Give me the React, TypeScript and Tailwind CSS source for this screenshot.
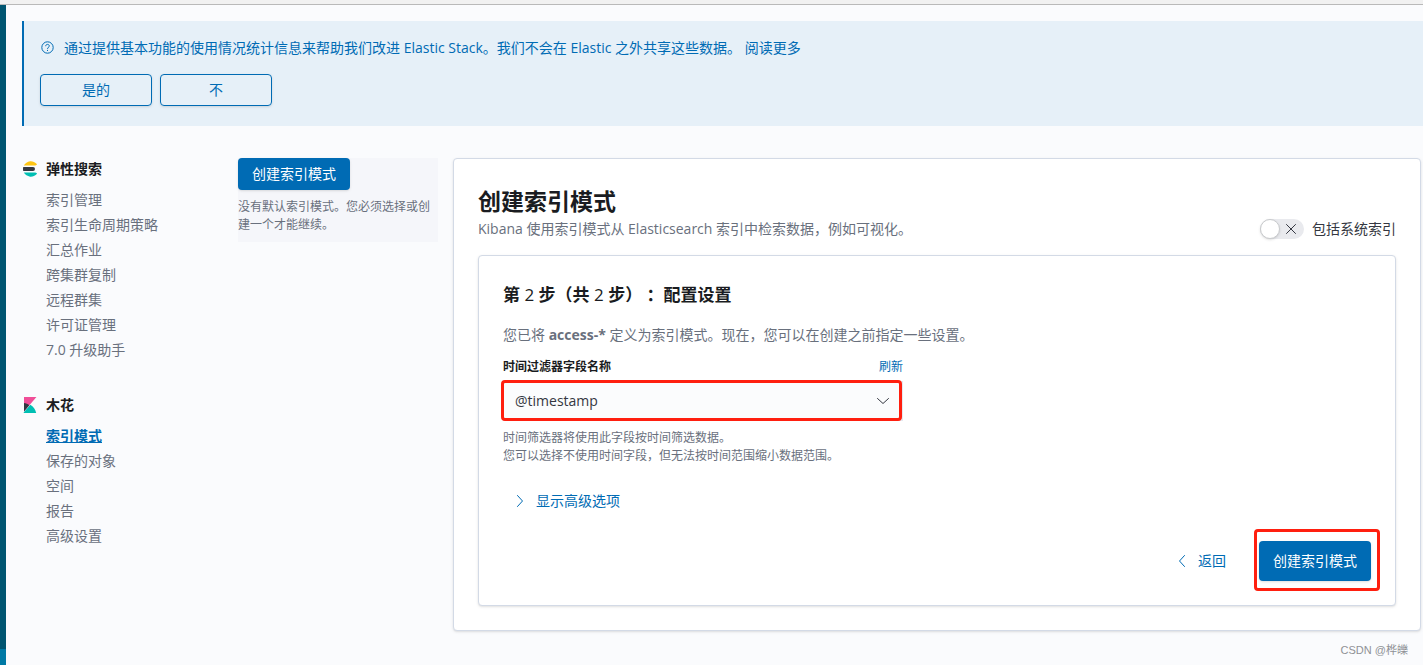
import React, { useState } from 'react';

interface NavSection {
  title: string;
  icon: React.ReactNode;
  items: string[];
  active?: string;
}

const ElasticsearchLogo = () => (
  <svg width="16" height="16" viewBox="0 0 32 32" aria-hidden="true">
    <path fill="#343741" d="M2 16c0 1.400.2 2.700.5 4H22a4 4 0 000-8H2.500A16 16 0 002 16z" />
    <path fill="#FEC514" d="M28.900 8a12 12 0 001.200-1.400A16 16 0 003.600 9h22.900c.9 0 1.700-.4 2.400-1z" />
    <path fill="#00BFB3" d="M26.500 23H3.600a16 16 0 0026.500 2.400A12 12 0 0028.900 24c-.7-.6-1.500-1-2.400-1z" />
  </svg>
);

const KibanaLogo = () => (
  <svg width="16" height="16" viewBox="0 0 32 32" aria-hidden="true">
    <path fill="#F04E98" d="M4 0v28.800L28.900 0z" />
    <path fill="#343741" d="M4 12v16.800L14.500 16.700C11.400 13.700 8 12.200 4 12z" />
    <path fill="#00BFB3" d="M16.600 15.600L3.300 31v1h25.100c-1.400-6.900-5.700-12.800-11.800-16.400z" />
  </svg>
);

const SECTIONS: NavSection[] = [
  {
    title: '弹性搜索',
    icon: <ElasticsearchLogo />,
    items: ['索引管理', '索引生命周期策略', '汇总作业', '跨集群复制', '远程群集', '许可证管理', '7.0 升级助手'],
  },
  {
    title: '木花',
    icon: <KibanaLogo />,
    items: ['索引模式', '保存的对象', '空间', '报告', '高级设置'],
    active: '索引模式',
  },
];

interface ChevronProps {
  d: string;
  className?: string;
}

const Chevron: React.FC<ChevronProps> = ({ d, className }) => (
  <svg className={className} width="16" height="16" viewBox="0 0 16 16" fill="none" stroke="currentColor" strokeWidth="1" strokeLinecap="round" strokeLinejoin="round" aria-hidden="true">
    <path d={d} />
  </svg>
);

const UsageCallout = () => (
  <section className="border-l-2 border-[#006BB4] bg-[#E6F0F8] px-4 pt-4 pb-5 text-[#006BB4]">
    <div className="flex items-center gap-2 leading-[22px]">
      <svg width="16" height="16" viewBox="0 0 16 16" fill="none" stroke="currentColor" strokeWidth="1" aria-hidden="true">
        <circle cx="7.500" cy="7.500" r="5.700" />
        <path d="M5.700 6.200c0-1.200.8-1.800 1.800-1.800s1.800.6 1.800 1.600c0 1.300-1.800 1.400-1.800 2.900M7.500 9.900v1.100" />
      </svg>
      <p>
        通过提供基本功能的使用情况统计信息来帮助我们改进 Elastic Stack。我们不会在 Elastic 之外共享这些数据。{' '}
        <a href="#telemetry" className="hover:underline">阅读更多</a>
      </p>
    </div>
    <div className="mt-[15px] flex gap-2">
      {['是的', '不'].map((label) => (
        <button key={label} className="h-8 w-28 rounded border border-[#006BB4] shadow-sm">
          {label}
        </button>
      ))}
    </div>
  </section>
);

const SideNav = () => (
  <nav className="flex w-[216px] shrink-0 flex-col gap-8">
    {SECTIONS.map((section) => (
      <div key={section.title}>
        <h2 className="mb-[7px] flex items-center gap-2 font-bold leading-[22px] text-[#1a1c21]">
          {section.icon}
          {section.title}
        </h2>
        <ul className="pl-6">
          {section.items.map((item) => (
            <li key={item} className="leading-[25px]">
              <a
                href="#management"
                className={item === section.active ? 'font-bold text-[#006BB4] underline' : 'text-[#69707D] hover:underline'}
              >
                {item}
              </a>
            </li>
          ))}
        </ul>
      </div>
    ))}
  </nav>
);

const StepPanel = () => (
  <div className="mt-4 rounded border border-[#D3DAE6] bg-white p-6 shadow-sm">
    <h2 className="text-[17px] font-bold leading-[30px] text-[#1a1c21] [text-spacing-trim:space-all]">
      第 <span className="font-medium">2</span> 步（共 <span className="font-medium">2</span> 步） ：配置设置
    </h2>
    <p className="mt-[15px] leading-5 text-[#69707D]">
      您已将 <strong>access-*</strong> 定义为索引模式。现在，您可以在创建之前指定一些设置。
    </p>

    <div className="w-[400px] max-w-full">
      <div className="mt-3 mb-1 flex justify-between text-xs leading-5">
        <label htmlFor="time-field" className="font-bold text-[#1a1c21]">时间过滤器字段名称</label>
        <button className="text-[#006BB4]">刷新</button>
      </div>
      <div className="relative">
        <select
          id="time-field"
          className="block h-10 w-full appearance-none border border-[#e5e9f0] bg-[#fbfcfd] px-[11px] text-sm text-[#343741]"
        >
          <option>@timestamp</option>
        </select>
        <Chevron d="M2.500 5.500l5.500 5 5.500-5" className="pointer-events-none absolute top-3 right-3 text-[#343741]" />
        <span className="pointer-events-none absolute -top-px right-px bottom-0 -left-0.5 rounded-sm border-3 border-[#FF1F0F]" />
      </div>
    </div>

    <p className="mt-2 text-xs leading-[18px] text-[#69707D]">
      时间筛选器将使用此字段按时间筛选数据。
      <br />
      您可以选择不使用时间字段，但无法按时间范围缩小数据范围。
    </p>

    <button className="mt-4 flex h-10 items-center gap-2 px-[9px] text-[#006BB4]">
      <Chevron d="M5.500 2.500l5 5.500-5 5.500" />
      显示高级选项
    </button>

    <div className="mt-5 flex items-center justify-end gap-[21px]">
      <button className="flex h-10 items-center gap-2 px-3 text-[#006BB4]">
        <Chevron d="M10.500 2.500l-5 5.500 5 5.500" />
        返回
      </button>
      <div className="relative">
        <button className="h-10 w-28 rounded bg-[#006BB4] text-white shadow-sm">创建索引模式</button>
        <span className="pointer-events-none absolute -top-3 -right-[9px] -bottom-2.5 -left-[5px] rounded-sm border-3 border-[#FF1F0F]" />
      </div>
    </div>
  </div>
);

const App: React.FC = () => {
  const [includeSystem, setIncludeSystem] = useState(false);

  return (
    <div className="flex min-h-screen flex-col bg-[#fafbfd] font-['Open_Sans','Noto_Sans_CJK_SC',sans-serif] text-sm">
      <div className="h-[5px] border-b border-[#b9b9b9] bg-[#f1f1f1]" />
      <div className="flex grow">
        <div className="flex w-1.5 shrink-0 flex-col bg-[#005571]">
          <div className="mt-auto h-4 bg-[#0079a5]" />
        </div>

        <div className="flex min-w-0 grow flex-col pt-4 pl-4">
          <UsageCallout />

          <div className="mt-8 flex items-start pr-0.5">
            <SideNav />

            <aside className="mr-[15px] w-[200px] shrink-0 bg-[#f5f6fa] pb-2">
              <button className="h-8 w-28 rounded bg-[#006BB4] text-white shadow-sm">创建索引模式</button>
              <p className="mt-2 text-xs leading-[18px] text-[#69707D]">
                没有默认索引模式。您必须选择或创建一个才能继续。
              </p>
            </aside>

            <main className="min-w-0 grow rounded border border-[#D3DAE6] bg-white p-6 shadow-sm">
              <div className="flex items-end justify-between">
                <div>
                  <h1 className="text-[23px] font-bold leading-9 text-[#1a1c21]">创建索引模式</h1>
                  <p className="leading-5 text-[#69707D]">
                    Kibana 使用索引模式从 Elasticsearch 索引中检索数据，例如可视化。
                  </p>
                </div>
                <label className="flex items-center gap-2 leading-5 text-[#343741]">
                  <input
                    type="checkbox"
                    role="switch"
                    className="peer sr-only"
                    checked={includeSystem}
                    onChange={(e) => setIncludeSystem(e.target.checked)}
                  />
                  <span
                    className={`flex h-5 w-11 items-center justify-between rounded-full ${includeSystem ? 'flex-row-reverse bg-[#006BB4]' : 'bg-[#e9eaee]'}`}
                  >
                    <span className="h-5 w-5 rounded-full border border-[#c9cbcd] bg-white shadow-sm" />
                    <Chevron d="M3.500 3.500l9 9M12.500 3.500l-9 9" className="mr-[5px]" />
                  </span>
                  包括系统索引
                </label>
              </div>
              <StepPanel />
            </main>
          </div>

          <footer className="mt-2 flex justify-end pr-[15px] text-[11px] leading-[22px] text-[#8f9196] font-['Liberation_Sans','Noto_Sans_CJK_SC',sans-serif]">
            CSDN @桦皪
          </footer>
        </div>
      </div>
    </div>
  );
};

export default App;
